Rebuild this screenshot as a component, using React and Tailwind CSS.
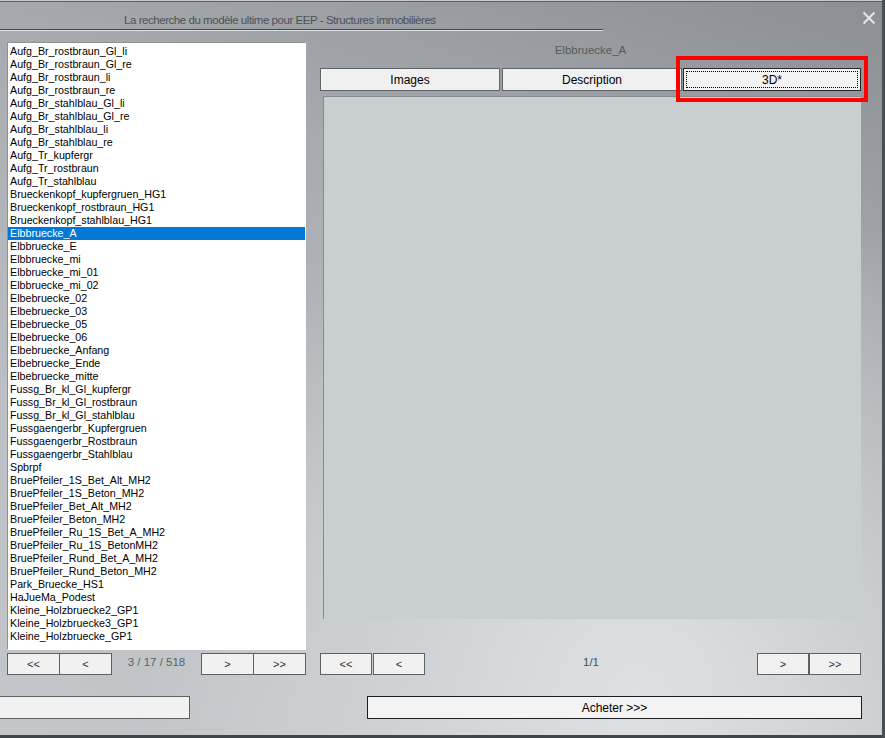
import React from "react";

const items = [
  "Aufg_Br_rostbraun_Gl_li",
  "Aufg_Br_rostbraun_Gl_re",
  "Aufg_Br_rostbraun_li",
  "Aufg_Br_rostbraun_re",
  "Aufg_Br_stahlblau_Gl_li",
  "Aufg_Br_stahlblau_Gl_re",
  "Aufg_Br_stahlblau_li",
  "Aufg_Br_stahlblau_re",
  "Aufg_Tr_kupfergr",
  "Aufg_Tr_rostbraun",
  "Aufg_Tr_stahlblau",
  "Brueckenkopf_kupfergruen_HG1",
  "Brueckenkopf_rostbraun_HG1",
  "Brueckenkopf_stahlblau_HG1",
  "Elbbruecke_A",
  "Elbbruecke_E",
  "Elbbruecke_mi",
  "Elbbruecke_mi_01",
  "Elbbruecke_mi_02",
  "Elbebruecke_02",
  "Elbebruecke_03",
  "Elbebruecke_05",
  "Elbebruecke_06",
  "Elbebruecke_Anfang",
  "Elbebruecke_Ende",
  "Elbebruecke_mitte",
  "Fussg_Br_kl_Gl_kupfergr",
  "Fussg_Br_kl_Gl_rostbraun",
  "Fussg_Br_kl_Gl_stahlblau",
  "Fussgaengerbr_Kupfergruen",
  "Fussgaengerbr_Rostbraun",
  "Fussgaengerbr_Stahlblau",
  "Spbrpf",
  "BruePfeiler_1S_Bet_Alt_MH2",
  "BruePfeiler_1S_Beton_MH2",
  "BruePfeiler_Bet_Alt_MH2",
  "BruePfeiler_Beton_MH2",
  "BruePfeiler_Ru_1S_Bet_A_MH2",
  "BruePfeiler_Ru_1S_BetonMH2",
  "BruePfeiler_Rund_Bet_A_MH2",
  "BruePfeiler_Rund_Beton_MH2",
  "Park_Bruecke_HS1",
  "HaJueMa_Podest",
  "Kleine_Holzbruecke2_GP1",
  "Kleine_Holzbruecke3_GP1",
  "Kleine_Holzbruecke_GP1",
];

const selected = "Elbbruecke_A";

function PagerButton({ label, overlap }) {
  return (
    <button
      className={
        overlap
          ? "w-[53px] h-[22px] -ml-px first:ml-0 bg-[#f1f1f1] border border-[#5c6168] text-[11px] text-[#2a2e33] flex items-center justify-center"
          : "w-[52px] h-[22px] bg-[#f1f1f1] border border-[#5c6168] text-[11px] text-[#2a2e33] flex items-center justify-center"
      }
    >
      {label}
    </button>
  );
}

function Tab({ label, active, className }) {
  return (
    <button
      className={
        (active
          ? "h-[23px] bg-[#f3f3f3] border border-[#23272b] p-[2px] text-[12px] text-black "
          : "h-[23px] bg-[#f0f0f0] border border-[#5f646a] text-[12px] text-black ") + className
      }
    >
      {active ? (
        <div className="w-full h-full border border-dotted border-black flex items-center justify-center">
          {label}
        </div>
      ) : (
        label
      )}
    </button>
  );
}

export default function App() {
  return (
    <div
      className="relative w-[885px] h-[738px] overflow-hidden bg-[radial-gradient(ellipse_at_72%_95%,#dde1e3_0%,rgba(221,225,227,0)_55%),linear-gradient(200deg,#8b8f93_0%,#a6aaae_32%,#bcc0c4_68%,#c3c7ca_100%)] flex flex-col"
      style={{ fontFamily: '"Liberation Sans", Arial, sans-serif' }}
    >
      <div className="h-px bg-[#c6cacd]"></div>
      <div className="h-px bg-[#5c6166]"></div>

      {/* title */}
      <div className="h-[40px] flex flex-col">
        <div className="w-[603px] h-[28px] border-b border-[#43484d] pl-[124px] pt-[11px] text-[11.5px] leading-[14px] tracking-[-0.45px] text-[#4c5157] whitespace-nowrap">
          La recherche du modèle ultime pour EEP - Structures immobilières
        </div>
        <div className="w-[603px] h-px bg-[#dfe2e4]"></div>
      </div>

      {/* close */}
      <div className="absolute left-[862px] top-[11px] w-[14px] h-[14px]">
        <svg width="14" height="14" viewBox="0 0 14 14">
          <path d="M1.5 1.5 L12.5 12.5 M12.5 1.5 L1.5 12.5" stroke="#e3e6e8" strokeWidth="2" />
        </svg>
      </div>

      <div className="flex">
        {/* left column */}
        <div className="ml-[7px] w-[299px] flex flex-col">
          <div className="h-[608px] bg-white border-l border-t border-[#8d9195] border-r-white border-b-white border-r border-b pt-[2px] text-[10.7px] leading-[13px] text-black overflow-hidden">
            {items.map((it) => (
              <div
                key={it}
                className={
                  it === selected
                    ? "h-[13px] pl-[2px] bg-[#0078d7] text-white whitespace-nowrap"
                    : "h-[13px] pl-[2px] whitespace-nowrap"
                }
              >
                {it}
              </div>
            ))}
          </div>
          <div className="mt-[3px] flex items-start">
            <div className="flex">
              <PagerButton label="<<" overlap />
              <PagerButton label="<" overlap />
            </div>
            <div className="flex-1 text-center text-[11.5px] leading-[14px] pt-[2px] text-[#5d6267]">
              3 / 17 / 518
            </div>
            <div className="flex">
              <PagerButton label=">" overlap />
              <PagerButton label=">>" overlap />
            </div>
          </div>
        </div>

        {/* right column */}
        <div className="ml-[14px] w-[541px] flex flex-col">
          <div className="h-[26px] text-center text-[11.5px] leading-[14px] pt-[1px] text-[#535a61]">
            Elbbruecke_A
          </div>
          <div className="flex">
            <Tab label="Images" className="w-[180px]" />
            <Tab label="Description" className="ml-[2px] w-[180px]" />
            <Tab label="3D*" active className="ml-px w-[178px]" />
          </div>
          <div className="ml-[3px] mt-[5px] h-[523px] bg-[#c9ced1] border-l border-t border-[#858a8f]"></div>
          <div className="mt-[34px] flex items-start">
            <div className="flex gap-px">
              <PagerButton label="<<" />
              <PagerButton label="<" />
            </div>
            <div className="flex-1 text-center text-[11.5px] leading-[14px] pt-[2px] text-[#484d52]">
              1/1
            </div>
            <div className="flex">
              <PagerButton label=">" />
              <PagerButton label=">>" />
            </div>
          </div>
        </div>
      </div>

      {/* bottom buttons */}
      <div className="mt-[21px] flex">
        <button className="-ml-[2px] w-[192px] h-[23px] bg-[#f1f1f1] border border-[#5c6168]"></button>
        <button className="ml-[177px] w-[495px] h-[23px] bg-[#f3f3f3] border border-[#1c2024] text-[12px] text-black">
          Acheter &gt;&gt;&gt;
        </button>
      </div>

      <div className="flex-1"></div>
      <div className="h-[3px] bg-[#40454a]"></div>

      {/* right frame edge */}
      <div className="absolute right-0 top-0 w-[3px] h-full bg-[#4a4f54]"></div>

      {/* red highlight */}
      <div className="absolute left-[676px] top-[56px] w-[192px] h-[46px] border-[4px] border-[#ff0000]"></div>
    </div>
  );
}
